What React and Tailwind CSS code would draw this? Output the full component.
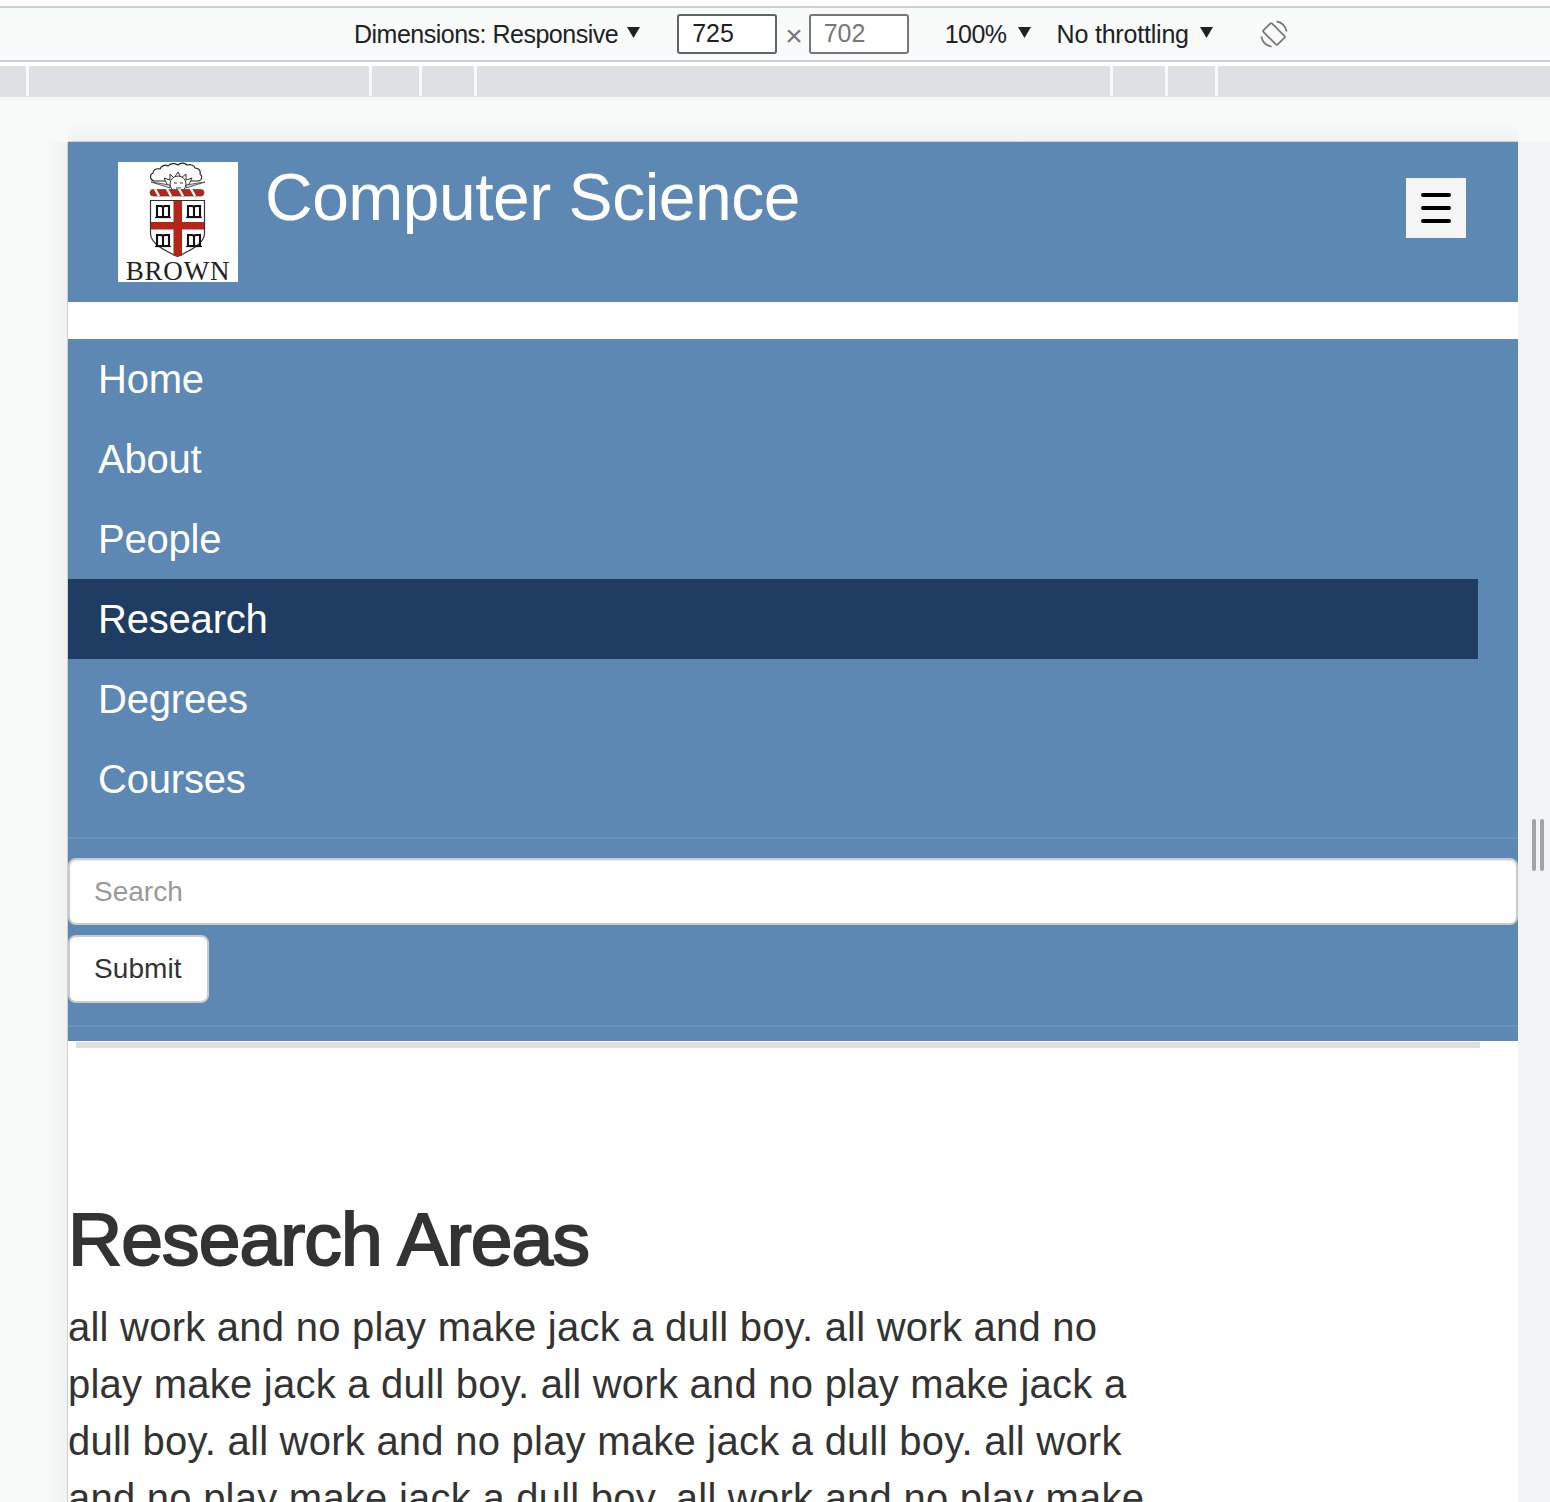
const NAV_ITEMS = ['Home', 'About', 'People', 'Research', 'Degrees', 'Courses'];
const RULER_SEGMENTS = ['w-[29px]', 'w-[343px]', 'w-[50px]', 'w-[55px]', 'w-[636px]', 'w-[55px]', 'w-[50px]'];
const BOOKS = [
  [38, 43],
  [69, 43],
  [38, 72],
  [69, 72],
];
const BODY_LINES = [
  'all work and no play make jack a dull boy. all work and no',
  'play make jack a dull boy. all work and no play make jack a',
  'dull boy. all work and no play make jack a dull boy. all work',
  'and no play make jack a dull boy. all work and no play make',
];

function DropArrow({ className = '' }) {
  return (
    <svg width="13" height="11" viewBox="0 0 13 11" className={className}>
      <polygon points="0,0 13,0 6.5,11" fill="#202124" />
    </svg>
  );
}

function RotateIcon() {
  return (
    <svg width="30" height="30" viewBox="0 0 30 30" fill="none" stroke="#777" strokeWidth="1.7">
      <rect x="9" y="5" width="12" height="20" rx="1" transform="rotate(-45 15 15)" />
      <path d="M17.500 2.300a13 13 0 0 1 10.200 10.200" />
      <path d="M2.300 17.500a13 13 0 0 0 10.200 10.200" />
    </svg>
  );
}

function BrownLogo() {
  return (
    <div className="flex h-[120px] w-[120px] shrink-0 flex-col items-center bg-white">
      <svg width="120" height="96" viewBox="0 0 120 96" className="shrink-0">
        {/* cloud */}
        <path
          d="M36 19c-4-1-5-6-1-8 0-3 3-5 7-4 1-3 5-5 8-3 2-3 7-3 10-1 3-3 7-2 9 0 3-1 7 0 8 3 4 0 6 3 5 6 3 2 2 6-1 7z"
          fill="#fff"
          stroke="#222"
          strokeWidth="1.1"
        />
        {/* sun rays and wings */}
        <path d="M50 24l-4-8 6 2 0-6 4 4 4-6 3 6 5-4 0 6 6-2-4 8z" fill="#fff" stroke="#333" strokeWidth="1" />
        <path d="M33 20l19 3v3zM87 20l-19 3v3z" fill="#ddd" stroke="#333" strokeWidth="0.8" />
        <circle cx="60" cy="22" r="8" fill="#fff" stroke="#333" strokeWidth="1" />
        <path d="M56 21h3M62 21h3M58 26h5" stroke="#333" strokeWidth="1.100" />
        {/* wreath */}
        <rect x="32" y="27.500" width="54" height="6.500" rx="3.200" fill="#b5261a" stroke="#444" strokeWidth="0.7" />
        <path d="M37 27l4 7M49 27l4 7M61 27l4 7M73 27l4 7" stroke="#fff" strokeWidth="2.400" />
        {/* shield */}
        <path d="M32.500 38.500h54v33c0 10-14 17-27 23-13-6-27-13-27-23z" fill="#fff" stroke="#333" strokeWidth="1.200" />
        <path d="M55.500 39h8.500v55l-4.200 0.300-4.300-0.300z" fill="#b5261a" />
        <rect x="33" y="60" width="53" height="7.500" fill="#b5261a" />
        {BOOKS.map(([x, y]) => (
          <g key={`${x}-${y}`} fill="none" stroke="#111" strokeWidth="2.100">
            <path d={`M${x + 1} ${y + 1}h4c1 0 2 1 2 2v9h-6zM${x + 13} ${y + 1}h-4c-1 0-2 1-2 2v9h6z`} />
            <path d={`M${x - 1} ${y + 12.500}h16`} strokeWidth="1.200" />
          </g>
        ))}
      </svg>
      <span className="mt-[2px] font-['Liberation_Serif',serif] text-[27px] leading-[22px] tracking-[0.800px] text-[#222]">
        BROWN
      </span>
    </div>
  );
}

function DevToolbar() {
  return (
    <>
      <div className="h-[6px] bg-white" />
      <div className="flex h-[56px] items-center border-y-2 border-[#cdd0d2] bg-[#f8f9f9] text-[25px] text-[#202124]">
        <span className="ml-[354px] mt-[1px] tracking-[-0.500px]">Dimensions: Responsive</span>
        <DropArrow className="mb-[3px] ml-[9px]" />
        <div className="ml-[37px] flex h-[40px] w-[100px] items-center rounded-[3px] border-2 border-[#5f6368] bg-white pl-[13px]">725</div>
        <span className="ml-[8px] mt-[3px] text-[30px] leading-none text-[#777]">×</span>
        <div className="ml-[6px] flex h-[40px] w-[100px] items-center rounded-[3px] border-2 border-[#777] bg-white pl-[13px] text-[#777]">702</div>
        <span className="ml-[36px] mt-[1px] tracking-[-0.500px]">100%</span>
        <DropArrow className="mb-[3px] ml-[11px]" />
        <span className="ml-[26px] mt-[1px] tracking-[-0.200px]">No throttling</span>
        <DropArrow className="mb-[3px] ml-[11px]" />
        <div className="ml-[46px]">
          <RotateIcon />
        </div>
      </div>
      <div className="h-[4px] bg-white" />
      <div className="flex h-[31px] bg-[#dfe0e4]">
        {RULER_SEGMENTS.map((w, i) => (
          <div key={i} className={`${w} h-[30px] border-r-[3px] border-[#f8f9f9]`} />
        ))}
      </div>
    </>
  );
}

function Viewport() {
  return (
    <div className="h-full w-[1450px] shrink-0 overflow-hidden bg-white">
      <header className="flex h-[160px] items-start bg-[#5c88b3] pl-[50px] pt-[20px]">
        <BrownLogo />
        <h1 className="ml-[27px] mt-[-3px] text-[66px] leading-[76px] tracking-[-0.500px] text-white">Computer Science</h1>
        <button className="ml-auto mr-[52px] mt-[16px] flex h-[60px] w-[60px] flex-col items-center justify-center gap-[9px] bg-[#f5f5f5]">
          <span className="h-[4px] w-[30px] rounded-full bg-black" />
          <span className="h-[4px] w-[30px] rounded-full bg-black" />
          <span className="h-[4px] w-[30px] rounded-full bg-black" />
        </button>
      </header>

      <div className="h-[37px] bg-white" />

      <nav className="bg-[#5c88b3]">
        <ul className="pb-[18px]">
          {NAV_ITEMS.map((item) => (
            <li
              key={item}
              className={`flex h-[80px] items-center pl-[30px] text-[40px] tracking-[-0.200px] text-white ${
                item === 'Research' ? 'mr-[40px] bg-[#1f3c63]' : ''
              }`}
            >
              {item}
            </li>
          ))}
        </ul>
        <div className="border-y-2 border-[#6a93ba] pb-[22px] pt-[19px]">
          <div className="flex h-[67px] items-center rounded-[8px] border-2 border-[#ccc] bg-white pl-[24px] text-[28px] text-[#999] shadow-[inset_0_1px_2px_rgba(0,0,0,0.1)]">
            Search
          </div>
          <button className="mt-[10px] flex h-[68px] w-[141px] items-center rounded-[8px] border-2 border-[#ccc] bg-white pl-[24px] text-[28px] tracking-[0.100px] text-[#333]">
            Submit
          </button>
        </div>
        <div className="h-[14px]" />
      </nav>

      <div className="ml-[8px] mr-[38px] mt-[1px] h-[6px] bg-[#dedede]" />

      <main className="pt-[151px] text-[#333]">
        <h2 className="text-[75px] leading-[80px] tracking-[-0.900px] [-webkit-text-stroke:2px_#333]">Research Areas</h2>
        <div className="mt-[20px] whitespace-nowrap text-[40px] leading-[57px] tracking-[0.240px]">
          {BODY_LINES.map((line) => (
            <p key={line}>{line}</p>
          ))}
        </div>
      </main>
    </div>
  );
}

export default function App() {
  return (
    <div className="flex h-[1502px] w-[1550px] flex-col overflow-hidden bg-[#f8f9f9] font-['Liberation_Sans',Arial,sans-serif]">
      <DevToolbar />
      <div className="h-[45px] pl-[68px]">
        <div className="h-full w-[1450px] border-b border-[#cfcfcf] bg-gradient-to-b from-[#f8f9f9] from-60% to-[#f1f2f2]" />
      </div>
      <div className="flex min-h-0 flex-1">
        <div className="w-[68px] shrink-0 border-r border-[#d0d0d0] bg-gradient-to-r from-[#f8f9f9] from-70% to-[#f0f1f1]" />
        <Viewport />
        <div className="flex flex-1 items-start bg-[#f1f3f5] pl-[14px] pt-[677px]">
          <div className="flex gap-[4px]">
            <span className="h-[52px] w-[4px] rounded-full bg-[#a3a3a3]" />
            <span className="h-[52px] w-[4px] rounded-full bg-[#a3a3a3]" />
          </div>
        </div>
      </div>
    </div>
  );
}
